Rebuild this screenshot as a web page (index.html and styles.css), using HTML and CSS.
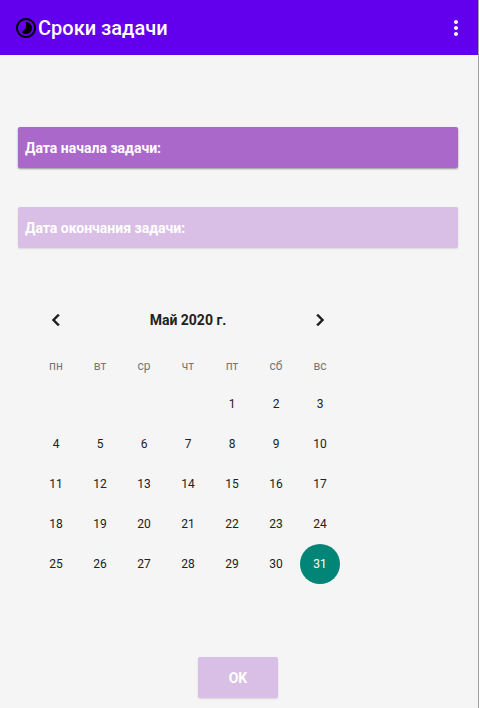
FILE: index.html
```html
<!DOCTYPE html>
<html lang="ru">
<head>
<meta charset="utf-8">
<meta name="viewport" content="width=device-width, initial-scale=1">
<title>Сроки задачи</title>
<link rel="stylesheet" href="styles.css">
</head>
<body>
<div class="screen">
  <header class="app-bar">
    <svg class="app-icon" viewBox="0 0 24 24" aria-hidden="true"><path d="M16.24 7.76C15.07 6.59 13.54 6 12 6v6l-4.24 4.24c2.34 2.34 6.14 2.34 8.49 0 2.34-2.34 2.34-6.14-.01-8.48zM12 2C6.48 2 2 6.48 2 12s4.48 10 10 10 10-4.48 10-10S17.52 2 12 2zm0 18c-4.42 0-8-3.58-8-8s3.58-8 8-8 8 3.58 8 8-3.58 8-8 8z"/></svg>
    <h1 class="app-title">Сроки задачи</h1>
    <button class="icon-button menu-button" type="button" aria-label="Меню">
      <svg viewBox="0 0 24 24" aria-hidden="true"><path d="M12 8c1.100 0 2-.9 2-2s-.9-2-2-2-2 .9-2 2 .9 2 2 2zm0 2c-1.100 0-2 .9-2 2s.9 2 2 2 2-.9 2-2-.9-2-2-2zm0 6c-1.100 0-2 .9-2 2s.9 2 2 2 2-.9 2-2-.9-2-2-2z"/></svg>
    </button>
  </header>
  <main class="content">
    <button class="date-button" type="button">Дата начала задачи:</button>
    <button class="date-button faded" type="button">Дата окончания задачи:</button>
    <section class="calendar" aria-label="Календарь">
      <div class="month-bar">
        <button class="icon-button chevron" type="button" aria-label="Предыдущий месяц">
          <svg viewBox="0 0 24 24" aria-hidden="true"><path d="M15.410 7.410L14 6l-6 6 6 6 1.410-1.410L10.830 12z"/></svg>
        </button>
        <h2 class="month">Май 2020 г.</h2>
        <button class="icon-button chevron" type="button" aria-label="Следующий месяц">
          <svg viewBox="0 0 24 24" aria-hidden="true"><path d="M10 6L8.590 7.410 13.170 12l-4.580 4.590L10 18l6-6z"/></svg>
        </button>
      </div>
      <table class="days">
        <thead>
          <tr><th>пн</th><th>вт</th><th>ср</th><th>чт</th><th>пт</th><th>сб</th><th>вс</th></tr>
        </thead>
        <tbody>
          <tr><td></td><td></td><td></td><td></td><td><button type="button">1</button></td><td><button type="button">2</button></td><td><button type="button">3</button></td></tr>
          <tr><td><button type="button">4</button></td><td><button type="button">5</button></td><td><button type="button">6</button></td><td><button type="button">7</button></td><td><button type="button">8</button></td><td><button type="button">9</button></td><td><button type="button">10</button></td></tr>
          <tr><td><button type="button">11</button></td><td><button type="button">12</button></td><td><button type="button">13</button></td><td><button type="button">14</button></td><td><button type="button">15</button></td><td><button type="button">16</button></td><td><button type="button">17</button></td></tr>
          <tr><td><button type="button">18</button></td><td><button type="button">19</button></td><td><button type="button">20</button></td><td><button type="button">21</button></td><td><button type="button">22</button></td><td><button type="button">23</button></td><td><button type="button">24</button></td></tr>
          <tr><td><button type="button">25</button></td><td><button type="button">26</button></td><td><button type="button">27</button></td><td><button type="button">28</button></td><td><button type="button">29</button></td><td><button type="button">30</button></td><td><button class="selected" type="button" aria-pressed="true">31</button></td></tr>
        </tbody>
      </table>
    </section>
    <button class="ok-button faded" type="button">OK</button>
  </main>
</div>
</body>
</html>
```

FILE: styles.css
```css
* {
  box-sizing: border-box;
}

body {
  margin: 0;
  background: #f5f5f5;
  font-family: Roboto, "Liberation Sans", sans-serif;
  color: #212121;
}

button {
  border: 0;
  padding: 0;
  background: none;
  font: inherit;
  color: inherit;
  cursor: pointer;
}

.screen {
  min-height: 100vh;
  border-right: 1px solid #a0a0a0;
}

.app-bar {
  display: flex;
  align-items: center;
  height: 55px;
  padding: 0 10px 0 14px;
  background: #6200ee;
  color: #fff;
}

.app-icon {
  width: 24px;
  height: 24px;
  fill: #000;
}

.app-title {
  margin: 0;
  font-size: 20px;
  line-height: 24px;
  font-weight: 500;
}

.icon-button {
  display: block;
  width: 24px;
  height: 24px;
}

.icon-button svg {
  display: block;
  width: 24px;
  height: 24px;
  fill: currentColor;
}

.chevron path {
  stroke: currentColor;
  stroke-width: 0.5;
}

.menu-button {
  margin-left: auto;
}

.content {
  display: flex;
  flex-direction: column;
  padding: 72px 20px 10px 18px;
}

.date-button,
.ok-button {
  height: 41px;
  border-radius: 2px;
  background: #aa68cb;
  color: #fff;
  font-size: 14px;
  line-height: 20px;
  font-weight: 700;
  box-shadow: 0 1px 2px rgba(0, 0, 0, 0.4);
}

.date-button {
  margin-bottom: 39px;
  padding: 0 7px;
  text-align: left;
}

.faded {
  background: #d9bfe5;
  box-shadow: 0 1px 2px rgba(0, 0, 0, 0.12);
}

.calendar {
  width: 308px;
  margin: 21px 0 73px 16px;
}

.month-bar {
  display: flex;
  align-items: center;
  justify-content: space-between;
  padding: 0 10px;
}

.month {
  margin: 0;
  font-size: 14px;
  line-height: 24px;
  font-weight: 700;
}

.days {
  width: 100%;
  margin-top: 14px;
  table-layout: fixed;
  border-collapse: collapse;
  font-size: 12px;
  text-align: center;
}

.days th {
  height: 38px;
  padding: 2px 0 0;
  font-weight: 400;
  color: #777;
}

.days td {
  height: 40px;
  padding: 0;
}

.days button {
  display: block;
  width: 40px;
  height: 40px;
  margin: 0 auto;
  border-radius: 50%;
}

.days .selected {
  background: #008577;
  color: #fff;
}

.ok-button {
  align-self: center;
  width: 80px;
}
```
